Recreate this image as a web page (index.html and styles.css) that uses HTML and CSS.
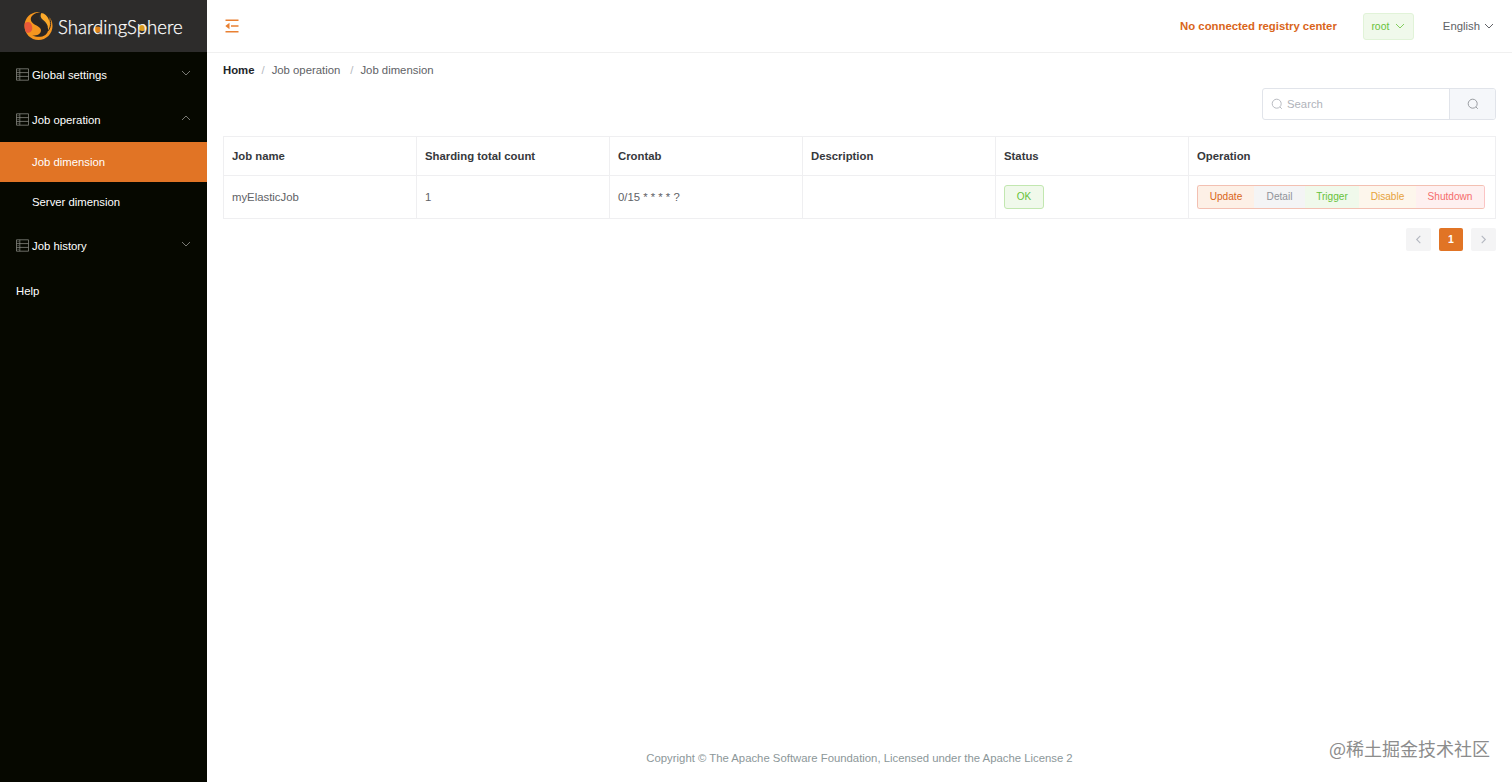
FILE: index.html
```html
<!DOCTYPE html>
<html lang="en">
<head>
    <meta charset="UTF-8">
    <meta name="viewport" content="width=device-width, initial-scale=1.0">
    <title>ShardingSphere</title>
    <link rel="stylesheet" href="styles.css">
</head>
<body>
    <svg class="sprite" width="0" height="0">
        <symbol id="list" viewBox="0 0 13 13">
            <path d="M.5.8h12v11.4H.5zM3.8.8v11.4M.5 4.6h12M.5 8.4h12M1.6 2.7h1M1.6 6.5h1M1.6 10.3h1"/>
        </symbol>
        <symbol id="down" viewBox="0 0 10 10"><path d="M1 3l4 4 4-4"/></symbol>
        <symbol id="up" viewBox="0 0 10 10"><path d="M1 7l4-4 4 4"/></symbol>
        <symbol id="left" viewBox="0 0 10 10"><path d="M7 1L3 5l4 4"/></symbol>
        <symbol id="right" viewBox="0 0 10 10"><path d="M3 1l4 4-4 4"/></symbol>
        <symbol id="search" viewBox="0 0 12 12"><circle cx="5.7" cy="5.7" r="4.5"/><path d="M9 9l1.8 1.8"/></symbol>
    </svg>
    <div class="app">
        <aside class="sidebar">
            <div class="logo">
                <svg class="logo-mark" viewBox="0 0 30 30">
                    <path d="M11 1C4 3 .5 9 .5 15C.5 23 7 29.500 15 29.500C23 29.500 29.500 23 29.500 15C29.500 11 28 7.500 25.500 5C27 10 26 15 23 18C20 13 13 11 12 7C11.500 4.500 14 2.500 17 1C15 .3 13 .3 11 1z" fill="#f5961f"/>
                    <path d="M1 12C4 9.500 8 11 8.500 16C9 20 6.500 22.500 2.500 22C.5 19 .3 15 1 12z" fill="#e8583a"/>
                    <path d="M18 .8C10 1 5.500 5.500 7.500 10C9.500 14 17 15 17.500 19C18 23 14 25.500 8.500 24.500C16 28.500 25 25 25 18.500C25 13 15.500 11 15 6.500C15 4 16.500 2 18 .8z" fill="#2b2623"/>
                    <path d="M18 1.500C16.500 4 17 6.500 19.500 8.500C23 11.500 25 14 25 18C27.500 13 26.500 7 22.500 3.500C21 2.300 19.500 1.500 18 1.500z" fill="#fba92a"/>
                    <path d="M25.500 5C29 10.500 27.500 17 25 20" fill="none" stroke="#2d2c2b"/>
                </svg>
                <span class="logo-text">Shar<span class="spark">d</span>ingS<span class="spark gold">p</span>here</span>
            </div>
            <nav class="menu">
                <div class="menu-item"><svg class="menu-icon"><use href="#list"/></svg><span>Global settings</span><svg class="arrow"><use href="#down"/></svg></div>
                <div class="menu-item"><svg class="menu-icon"><use href="#list"/></svg><span>Job operation</span><svg class="arrow"><use href="#up"/></svg></div>
                <div class="sub-item active">Job dimension</div>
                <div class="sub-item">Server dimension</div>
                <div class="menu-item history"><svg class="menu-icon"><use href="#list"/></svg><span>Job history</span><svg class="arrow"><use href="#down"/></svg></div>
                <div class="menu-item">Help</div>
            </nav>
        </aside>
        <div class="main">
            <header class="header">
                <svg class="fold" viewBox="0 0 14 14"><path d="M.5 1.300h13M6 7h7.500M.5 12.700h13"/><path class="tri" d="M.3 7L4.500 3.800v6.400z"/></svg>
                <div class="registry">No connected registry center</div>
                <button class="user">root<svg><use href="#down"/></svg></button>
                <div class="lang">English<svg><use href="#down"/></svg></div>
            </header>
            <div class="breadcrumb">
                <b>Home</b><i>/</i><span>Job operation</span><i class="wide">/</i><span>Job dimension</span>
            </div>
            <div class="content">
                <div class="search">
                    <div class="search-input"><svg><use href="#search"/></svg>Search</div>
                    <button class="search-btn"><svg><use href="#search"/></svg></button>
                </div>
                <table class="table">
                    <colgroup><col class="col"><col class="col"><col class="col"><col class="col"><col class="col"><col></colgroup>
                    <tr>
                        <th>Job name</th>
                        <th>Sharding total count</th>
                        <th>Crontab</th>
                        <th>Description</th>
                        <th>Status</th>
                        <th>Operation</th>
                    </tr>
                    <tr>
                        <td>myElasticJob</td>
                        <td>1</td>
                        <td>0/15 * * * * ?</td>
                        <td></td>
                        <td><button class="ok">OK</button></td>
                        <td>
                            <div class="actions">
                                <button class="update">Update</button>
                                <button class="detail">Detail</button>
                                <button class="trigger">Trigger</button>
                                <button class="disable">Disable</button>
                                <button class="shutdown">Shutdown</button>
                            </div>
                        </td>
                    </tr>
                </table>
                <div class="pager">
                    <button><svg><use href="#left"/></svg></button>
                    <button class="current">1</button>
                    <button><svg><use href="#right"/></svg></button>
                </div>
            </div>
            <footer class="footer">Copyright © The Apache Software Foundation, Licensed under the Apache License 2</footer>
        </div>
    </div>
    <div class="watermark">@稀土掘金技术社区</div>
</body>
</html>
```
FILE: styles.css
```css
* {
    box-sizing: border-box;
}
body {
    margin: 0;
    font-family: "Liberation Sans", Arial, sans-serif;
    font-size: 11.33px;
    color: #606266;
    background: #fff;
}
button {
    font-family: inherit;
    padding: 0;
    border: 0;
}
svg {
    fill: none;
    stroke: currentColor;
    flex: none;
}
.sprite {
    position: absolute;
}
.app {
    display: flex;
    height: 100vh;
}

/* sidebar */
.sidebar {
    flex: none;
    width: 207px;
    background: #060800;
    color: #fff;
}
.logo {
    height: 52px;
    padding-left: 24px;
    display: flex;
    align-items: center;
    background: #2d2c2b;
}
.logo-mark {
    width: 29px;
    height: 30px;
    stroke: none;
}
.logo-text {
    margin: 1px 0 0 5px;
    font-family: Lato, sans-serif;
    font-weight: 300;
    font-size: 18.6px;
    line-height: 24px;
    -webkit-text-stroke: .25px #fff;
}
.spark {
    background: radial-gradient(ellipse 5px 3.5px at 45% 62%, #d9801c 75%, transparent);
}
.gold {
    background: radial-gradient(ellipse 5px 3.5px at 55% 54%, #d99a1c 75%, transparent);
}
.menu-item {
    height: 45px;
    padding: 1px 16px 0;
    display: flex;
    align-items: center;
}
.menu-icon {
    width: 13px;
    height: 13px;
    margin: -2px 3px 0 0;
    color: #85867f;
    stroke-width: .8;
}
.arrow {
    width: 10px;
    height: 10px;
    margin: -4px 0 0 auto;
    color: #85867f;
    stroke-width: .9;
}
.sub-item {
    height: 40px;
    padding-left: 32px;
    line-height: 40px;
}
.active {
    background: #e17425;
}
.history {
    margin-top: 1px;
}

/* header */
.main {
    flex: 1;
    display: flex;
    flex-direction: column;
}
.header {
    height: 53px;
    padding: 0 18px;
    display: flex;
    align-items: center;
    border-bottom: 1px solid #f0f0f0;
}
.fold {
    width: 14px;
    height: 14px;
    color: #e98032;
    stroke-width: 1.6;
}
.tri {
    fill: currentColor;
    stroke: none;
}
.registry {
    margin-left: auto;
    font-weight: bold;
    color: #d9651a;
}
.user {
    width: 51px;
    height: 27px;
    margin: 1px 29px 0 26px;
    padding-bottom: 1px;
    display: flex;
    align-items: center;
    justify-content: center;
    font-size: 10.4px;
    color: #67c23a;
    background: #f0f9eb;
    border: 1px solid #e1f3d8;
    border-radius: 3px;
}
.user svg {
    width: 10px;
    height: 10px;
    margin-left: 6px;
    stroke-width: .8;
}
.lang {
    display: flex;
    align-items: center;
}
.lang svg {
    width: 10px;
    height: 10px;
    margin-left: 4px;
}
.breadcrumb {
    padding: 11px 16px 0;
    line-height: 13px;
    color: #606266;
}
.breadcrumb b {
    color: #222429;
}
.breadcrumb i {
    margin: 0 7px;
    color: #b4b8c0;
    font-style: normal;
}
.breadcrumb .wide {
    margin-left: 10px;
}

/* content */
.content {
    padding: 11px 16px 0;
}
.search {
    width: 234px;
    height: 32px;
    margin: 0 0 16px auto;
    display: flex;
    border: 1px solid #e1e4ea;
    border-radius: 3px;
    overflow: hidden;
}
.search-input {
    flex: 1;
    padding-left: 8px;
    display: flex;
    align-items: center;
    color: #b0b3ba;
}
.search svg {
    width: 12px;
    height: 12px;
    stroke-width: .9;
}
.search-input svg {
    margin-right: 4px;
}
.search-btn {
    width: 46px;
    display: flex;
    align-items: center;
    justify-content: center;
    color: #909399;
    background: #f5f7fa;
    border-left: 1px solid #e1e4ea;
}
.table {
    width: 100%;
    table-layout: fixed;
    border-collapse: collapse;
}
.col {
    width: 193px;
}
.table th,
.table td {
    height: 39px;
    padding: 0 8px;
    text-align: left;
    border: 1px solid #efeff1;
}
.table th {
    padding-bottom: 1px;
    color: #36383c;
}
.table td {
    height: 43px;
}
.ok {
    display: block;
    width: 40px;
    height: 24px;
    padding-bottom: 1px;
    font-size: 10px;
    color: #67c23a;
    background: #f0f9eb;
    border: 1px solid #c2e7b0;
    border-radius: 3px;
}
.actions {
    display: flex;
    width: 288px;
    height: 24px;
    border: 1px solid #f3c0b2;
    border-right-color: #fbc4c4;
    border-radius: 3px;
    overflow: hidden;
}
.actions button {
    padding-bottom: 1px;
    font-size: 10.1px;
}
.update {
    width: 56px;
    color: #d9651a;
    background: #fdf0e6;
}
.detail {
    width: 51px;
    color: #909399;
    background: #f4f4f5;
}
.trigger {
    width: 54px;
    color: #67c23a;
    background: #f0f9eb;
}
.disable {
    width: 57px;
    color: #e6a23c;
    background: #fdf6ec;
}
.shutdown {
    flex: 1;
    color: #f56c6c;
    background: #fef0f0;
}
.pager {
    margin-top: 9px;
    display: flex;
    justify-content: flex-end;
    gap: 8px;
}
.pager button {
    width: 25px;
    height: 23px;
    display: flex;
    align-items: center;
    justify-content: center;
    font-size: 10.5px;
    font-weight: bold;
    color: #b4b8c0;
    background: #f4f4f5;
    border-radius: 2px;
}
.pager svg {
    width: 9px;
    height: 9px;
    stroke-width: 1.2;
}
.pager .current {
    width: 24px;
    padding-bottom: 1px;
    color: #fff;
    background: #e17425;
}
.footer {
    margin-top: auto;
    padding-bottom: 17px;
    line-height: 13px;
    text-align: center;
    color: #8c9799;
}
.watermark {
    position: absolute;
    right: 22px;
    bottom: 21px;
    font-family: "Noto Sans CJK SC", sans-serif;
    font-size: 18px;
    line-height: 26px;
    color: #8c8c8c;
}
```
